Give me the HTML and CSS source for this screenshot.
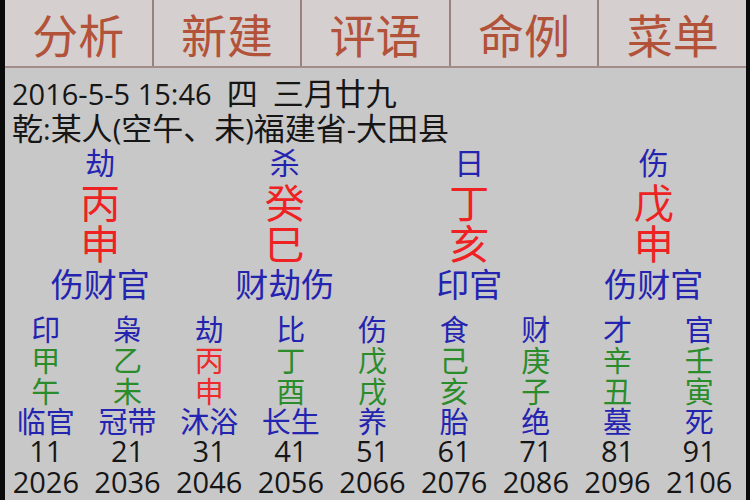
FILE: index.html
```html
<!DOCTYPE html>
<html lang="zh">
<head>
<meta charset="utf-8">
<link rel="stylesheet" href="styles.css">
</head>
<body>
<div class="screen">
  <nav class="tabs">
    <div class="tab">分析</div>
    <div class="tab">新建</div>
    <div class="tab">评语</div>
    <div class="tab">命例</div>
    <div class="tab">菜单</div>
  </nav>
  <div class="info">
    <div class="line">2016-5-5 15:46  <span class="cj">四</span>  <span class="cj">三月廿九</span></div>
    <div class="line"><span class="cj">乾</span>:<span class="cj">某人</span>(<span class="cj">空午、未</span>)<span class="cj">福建省</span>-<span class="cj">大田县</span></div>
  </div>
  <div class="pillars">
    <div class="pillar"><div class="p-god">劫</div><div class="p-stem">丙</div><div class="p-branch">申</div><div class="p-hidden">伤财官</div></div>
    <div class="pillar"><div class="p-god">杀</div><div class="p-stem">癸</div><div class="p-branch">巳</div><div class="p-hidden">财劫伤</div></div>
    <div class="pillar"><div class="p-god">日</div><div class="p-stem">丁</div><div class="p-branch">亥</div><div class="p-hidden">印官</div></div>
    <div class="pillar"><div class="p-god">伤</div><div class="p-stem">戊</div><div class="p-branch">申</div><div class="p-hidden">伤财官</div></div>
  </div>
  <div class="luck">
    <div class="col"><div class="god">印</div><div class="gz">甲</div><div class="gz">午</div><div class="stage">临官</div><div class="num">11</div><div class="num">2026</div></div>
    <div class="col"><div class="god">枭</div><div class="gz">乙</div><div class="gz">未</div><div class="stage">冠带</div><div class="num">21</div><div class="num">2036</div></div>
    <div class="col"><div class="god">劫</div><div class="gz fire">丙</div><div class="gz fire">申</div><div class="stage">沐浴</div><div class="num">31</div><div class="num">2046</div></div>
    <div class="col"><div class="god">比</div><div class="gz">丁</div><div class="gz">酉</div><div class="stage">长生</div><div class="num">41</div><div class="num">2056</div></div>
    <div class="col"><div class="god">伤</div><div class="gz">戊</div><div class="gz">戌</div><div class="stage">养</div><div class="num">51</div><div class="num">2066</div></div>
    <div class="col"><div class="god">食</div><div class="gz">己</div><div class="gz">亥</div><div class="stage">胎</div><div class="num">61</div><div class="num">2076</div></div>
    <div class="col"><div class="god">财</div><div class="gz">庚</div><div class="gz">子</div><div class="stage">绝</div><div class="num">71</div><div class="num">2086</div></div>
    <div class="col"><div class="god">才</div><div class="gz">辛</div><div class="gz">丑</div><div class="stage">墓</div><div class="num">81</div><div class="num">2096</div></div>
    <div class="col"><div class="god">官</div><div class="gz">壬</div><div class="gz">寅</div><div class="stage">死</div><div class="num">91</div><div class="num">2106</div></div>
  </div>
</div>
</body>
</html>
```
FILE: styles.css
```css
html, body {
  margin: 0;
  padding: 0;
  background: #0a0a0a;
}
body {
  font-family: "Open Sans", "Noto Sans CJK SC", sans-serif;
  color: #151515;
}
.screen {
  margin: 0 4px 0 5px;
  height: 500px;
  background: #c9c8c9;
  overflow: hidden;
  display: flex;
  flex-direction: column;
}
.tabs {
  display: flex;
  height: 66px;
  background: #d5cfd0;
  border-bottom: 2px solid #a38c8a;
  flex-shrink: 0;
}
.tab {
  flex: 1;
  text-align: center;
  font-family: "Noto Sans CJK SC", sans-serif;
  font-size: 46px;
  line-height: 66px;
  color: #b25239;
  border-right: 2px solid #98817e;
}
.tab:last-child {
  border-right: none;
}
.info {
  padding: 6px 0 0 7px;
}
.line {
  font-size: 29px;
  line-height: 35px;
  height: 35px;
  white-space: pre;
  color: #161616;
}
.cj {
  font-family: "Noto Sans CJK SC", sans-serif;
  font-size: 31px;
}
.pillars {
  display: flex;
  margin-top: -2px;
  padding-left: 3px;
}
.pillar {
  flex: 1;
  display: flex;
  flex-direction: column;
  align-items: center;
  font-family: "Noto Sans CJK SC", sans-serif;
}
.p-god {
  font-size: 30px;
  line-height: 38px;
  height: 38px;
  color: #2424b0;
}
.p-stem {
  font-size: 40px;
  line-height: 42px;
  height: 42px;
  color: #ee2222;
}
.p-branch {
  font-size: 40px;
  line-height: 40px;
  height: 40px;
  color: #ee2222;
}
.p-hidden {
  font-size: 33px;
  line-height: 42px;
  height: 42px;
  color: #2424b0;
}
.luck {
  display: grid;
  grid-template-columns: repeat(9, 1fr);
  margin-top: 9px;
  padding-right: 6px;
}
.col {
  display: flex;
  flex-direction: column;
  align-items: center;
}
.col > div {
  line-height: 31px;
  height: 31px;
  font-size: 29px;
}
.god, .stage, .gz {
  font-family: "Noto Sans CJK SC", sans-serif;
}
.god, .stage {
  color: #2424b0;
}
.col > .stage {
  line-height: 29px;
  height: 29px;
}
.gz {
  color: #2b8c2b;
}
.gz.fire {
  color: #ee2a2a;
}
.num {
  color: #161616;
}
```
